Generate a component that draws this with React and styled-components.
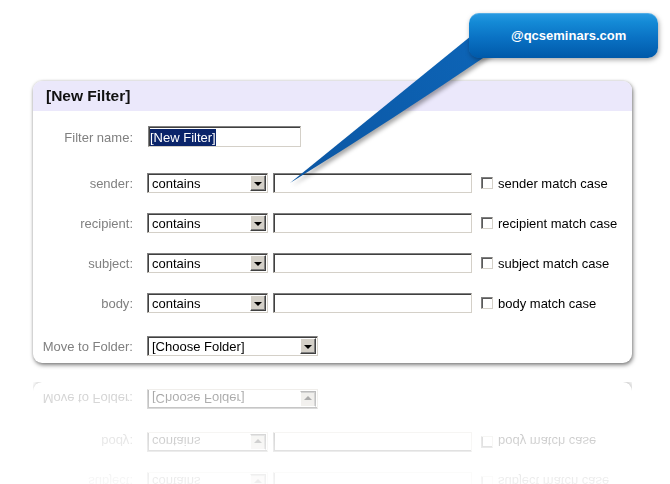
import React from 'react';
import styled, { createGlobalStyle } from 'styled-components';

const Global = createGlobalStyle`
  html, body { margin: 0; padding: 0; background: #fff; overflow: hidden; }
  body { font-family: "Liberation Sans", Arial, sans-serif; }
`;

const Page = styled.div`
  position: relative;
  width: 670px;
  height: 484px;
  overflow: hidden;
  box-sizing: border-box;
  padding: 81px 0 0 33px;
`;

const Panel = styled.section`
  width: 599px;
  height: 282px;
  box-sizing: border-box;
  background: #fff;
  border-radius: 9px;
  box-shadow: 1px 2px 4px rgba(0, 0, 0, 0.5), 0 0 3px rgba(0, 0, 0, 0.15);
  -webkit-box-reflect: below 19px
    linear-gradient(to bottom, transparent 55%, rgba(255, 255, 255, 0.12) 72%, rgba(255, 255, 255, 0.38));
  display: flex;
  flex-direction: column;
  overflow: hidden;
`;

const Header = styled.header`
  height: 30px;
  flex: none;
  display: flex;
  align-items: center;
  padding-left: 13px;
  background: #ebe8fb;
  font-size: 15.5px;
  font-weight: bold;
  color: #111;
`;

const Body = styled.div`
  display: flex;
  flex-direction: column;
  padding-top: 15px;
`;

const Row = styled.div`
  display: flex;
  align-items: center;
  height: 21px;
  margin-top: ${(p) => p.$mt || 0}px;
`;

const Label = styled.label`
  width: 100px;
  flex: none;
  margin-right: 14px;
  padding-top: 1px;
  text-align: right;
  font-size: 13px;
  color: #808080;
`;

const sunken = `
  box-sizing: border-box;
  border-top: 1px solid #808080;
  border-left: 1px solid #808080;
  border-right: 1px solid #d4d0c8;
  border-bottom: 1px solid #d4d0c8;
  box-shadow: inset 1px 1px 0 #404040;
  background: #fff;
`;

const TextBox = styled.div`
  ${sunken}
  width: ${(p) => p.$w}px;
  height: ${(p) => p.$h || 20}px;
  margin-left: ${(p) => p.$ml || 0}px;
  padding: 1px 0 0 1px;
  display: flex;
  align-items: center;
  font-size: 13px;
  color: #000;
`;

const Selected = styled.span`
  background: #0a246a;
  color: #fff;
  line-height: 17px;
`;

const Combo = styled.div`
  ${sunken}
  width: ${(p) => p.$w}px;
  height: 20px;
  display: flex;
  align-items: center;
  justify-content: space-between;
  padding: 2px 1px 1px 4px;
  font-size: 13px;
  color: #000;
`;

const ArrowBtn = styled.span`
  width: 16px;
  height: 16px;
  box-sizing: border-box;
  background: #d4d0c8;
  border-top: 1px solid #fff;
  border-left: 1px solid #fff;
  border-right: 1px solid #404040;
  border-bottom: 1px solid #404040;
  box-shadow: inset -1px -1px 0 #808080;
  display: flex;
  align-items: center;
  justify-content: center;
  align-self: center;
  &::after {
    content: '';
    width: 0;
    height: 0;
    border-left: 4px solid transparent;
    border-right: 4px solid transparent;
    border-top: 4px solid #000;
    margin-top: 1px;
  }
`;

const Check = styled.span`
  width: 12px;
  height: 12px;
  box-sizing: border-box;
  margin-left: 9px;
  flex: none;
  border-top: 1px solid #808080;
  border-left: 1px solid #808080;
  border-right: 1px solid #d4d0c8;
  border-bottom: 1px solid #d4d0c8;
  box-shadow: inset 1px 1px 0 #5a5a5a;
  background: #fff;
`;

const CheckText = styled.span`
  margin-left: 5px;
  padding-top: 1px;
  font-size: 13px;
  color: #000;
`;

const Tail = styled.svg`
  position: absolute;
  left: 0;
  top: 0;
  width: 670px;
  height: 200px;
  pointer-events: none;
  overflow: visible;
  filter: drop-shadow(2px 3px 2px rgba(0, 0, 0, 0.35));
`;

const Bubble = styled.div`
  position: absolute;
  left: 469px;
  top: 13px;
  width: 189px;
  height: 45px;
  box-sizing: border-box;
  border-radius: 10px;
  background: linear-gradient(to bottom, #2a9be2 0%, #148ad6 20%, #0a72c4 55%, #0059a9 100%);
  box-shadow: 1px 2px 5px rgba(0, 0, 0, 0.35), inset 0 1px 0 rgba(255, 255, 255, 0.2);
  display: flex;
  align-items: center;
  padding-left: 42px;
  color: #fff;
  font-size: 13px;
  font-weight: bold;
`;

const criteria = ['sender', 'recipient', 'subject', 'body'];

export default function App() {
  return (
    <Page>
      <Global />
      <Panel>
        <Header>[New Filter]</Header>
        <Body>
          <Row>
            <Label>Filter name:</Label>
            <TextBox $w={153} $h={21} $ml={1}>
              <Selected>[New Filter]</Selected>
            </TextBox>
          </Row>
          {criteria.map((c, i) => (
            <Row key={c} $mt={i === 0 ? 25 : 19}>
              <Label>{c}:</Label>
              <Combo $w={121}>
                <span>contains</span>
                <ArrowBtn />
              </Combo>
              <TextBox $w={199} $ml={5} />
              <Check />
              <CheckText>{c} match case</CheckText>
            </Row>
          ))}
          <Row $mt={22}>
            <Label>Move to Folder:</Label>
            <Combo $w={171}>
              <span>[Choose Folder]</span>
              <ArrowBtn />
            </Combo>
          </Row>
        </Body>
      </Panel>
      <Tail viewBox="0 0 670 200">
        <defs>
          <linearGradient id="tailGrad" x1="290" y1="183" x2="480" y2="45" gradientUnits="userSpaceOnUse">
            <stop offset="0" stopColor="#0b56a3" />
            <stop offset="1" stopColor="#0d64b6" />
          </linearGradient>
        </defs>
        <path d="M 471 36 L 290 183 Q 395 118 492 52 Z" fill="url(#tailGrad)" />
      </Tail>
      <Bubble>@qcseminars.com</Bubble>
    </Page>
  );
}
